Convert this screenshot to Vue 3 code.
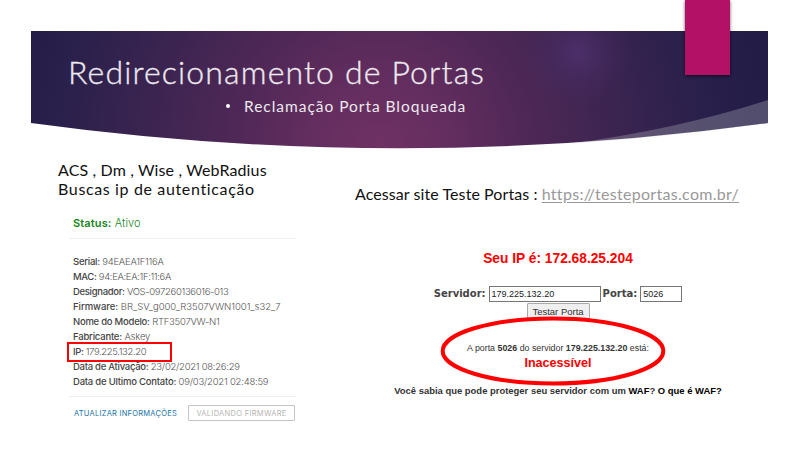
<script setup>
const device = [
  { label: 'Serial:', value: '94EAEA1F116A', spacing: -0.25 },
  { label: 'MAC:', value: '94:EA:EA:1F:11:6A', spacing: -0.35 },
  { label: 'Designador:', value: 'VOS-097260136016-013', spacing: -0.32 },
  { label: 'Firmware:', value: 'BR_SV_g000_R3507VWN1001_s32_7', spacing: -0.03 },
  { label: 'Nome do Modelo:', value: 'RTF3507VW-N1', spacing: -0.25 },
  { label: 'Fabricante:', value: 'Askey', spacing: -0.2 },
  { label: 'IP:', value: '179.225.132.20', spacing: -0.38, marked: true },
  { label: 'Data de Ativação:', value: '23/02/2021 08:26:29', spacing: -0.27 },
  { label: 'Data de Ultimo Contato:', value: '09/03/2021 02:48:59', spacing: -0.22 },
]
</script>

<template>
  <main class="slide">
    <header class="banner">
      <svg class="backdrop" viewBox="0 0 737 119" aria-hidden="true">
        <defs>
          <radialGradient id="base" gradientUnits="userSpaceOnUse" cx="349" cy="119" r="395">
            <stop offset="0" stop-color="#703163" />
            <stop offset=".16" stop-color="#652e60" />
            <stop offset=".36" stop-color="#502857" />
            <stop offset=".6" stop-color="#3b2450" />
            <stop offset=".82" stop-color="#29204b" />
            <stop offset="1" stop-color="#221c47" />
          </radialGradient>
          <radialGradient id="glow" gradientUnits="userSpaceOnUse" cx="547" cy="22" r="56">
            <stop offset="0" stop-color="#4e306d" stop-opacity=".9" />
            <stop offset=".5" stop-color="#462b62" stop-opacity=".5" />
            <stop offset="1" stop-color="#452859" stop-opacity="0" />
          </radialGradient>
        </defs>
        <path d="M0 0H737V92Q368 142.500 0 92Z" fill="url(#base)" />
        <path d="M0 0H737V92Q368 142.500 0 92Z" fill="url(#glow)" />
        <path d="M737 69Q648 98 540 112.500Q640 106 737 92Z" fill="#b9b9bd" fill-opacity=".32" />
      </svg>
      <h1>Redirecionamento de Portas</h1>
      <p class="subtitle"><span class="dot"></span><span>Reclamação Porta Bloqueada</span></p>
      <div class="ribbon"></div>
    </header>

    <div class="columns">
      <section class="left">
        <h2 class="intro"><span class="one">ACS , Dm , Wise , WebRadius</span><br><span class="two">Buscas ip de autenticação</span></h2>
        <div class="panel">
          <p class="status"><b>Status:</b> Ativo</p>
          <ul class="details">
            <li v-for="row in device" :key="row.label" :class="{ marked: row.marked }" :style="{ letterSpacing: row.spacing + 'px' }">
              <b>{{ row.label }}</b> {{ row.value }}
            </li>
          </ul>
          <div class="actions">
            <a class="refresh">ATUALIZAR INFORMAÇÕES</a>
            <button class="validating">VALIDANDO FIRMWARE</button>
          </div>
        </div>
      </section>

      <section class="right">
        <p class="access">Acessar site Teste Portas : <a>https://testeportas.com.br/</a></p>
        <div class="checker">
          <h3>Seu IP é: 172.68.25.204</h3>
          <div class="fields">
            <label>Servidor:</label><span class="input server">179.225.132.20</span>
            <label>Porta:</label><span class="input port">5026</span>
          </div>
          <button class="test">Testar Porta</button>
          <div class="result">
            <p>A porta <b>5026</b> do servidor <b>179.225.132.20</b> está:</p>
            <strong>Inacessível</strong>
            <svg class="ring" viewBox="0 0 226 70" aria-hidden="true">
              <ellipse cx="113" cy="35" rx="110.300" ry="32.500" />
            </svg>
          </div>
          <p class="waf">Você sabia que pode proteger seu servidor com um <b>WAF</b>? <b>O que é WAF?</b></p>
        </div>
      </section>
    </div>
  </main>
</template>

<style>
body { margin: 0; background: #fff; }
</style>

<style scoped>
* { box-sizing: border-box; }
h1, h2, h3, p, ul { margin: 0; padding: 0; font-weight: 400; }
.slide { width: 800px; height: 450px; overflow: hidden; padding: 31px 32px 0 31px; background: #fff; font-family: "Century Gothic", "URW Gothic", Lato, sans-serif; white-space: nowrap; }
.banner { position: relative; height: 119px; padding: 21px 0 0 37px; color: #ece9ed; }
.backdrop { position: absolute; left: 0; top: 0; width: 737px; height: 119px; }
h1 { position: relative; font-size: 32px; line-height: 40px; font-weight: 300; letter-spacing: 1.15px; -webkit-text-stroke: .35px #ece9ed; }
.subtitle { position: relative; display: flex; align-items: center; padding: 4px 0 0 158px; font-size: 15.5px; line-height: 20px; letter-spacing: .97px; }
.dot { width: 4px; height: 4px; border-radius: 50%; background: #fff; margin-right: 14px; }
.ribbon { position: absolute; left: 654px; top: -31px; width: 45px; height: 75px; background: #b31166; box-shadow: 0 1px 3px rgba(0, 0, 0, .65); }
.columns { display: grid; grid-template-columns: 310px 1fr; }
.left { padding: 10px 0 0 27px; }
.intro { font-size: 16px; line-height: 19px; color: #111; }
.one { letter-spacing: .13px; }
.two { letter-spacing: .64px; }
.panel { width: 227px; margin-left: 11px; padding-top: 16px; font-family: Inter, sans-serif; }
.status { height: 25px; padding-left: 4px; border-bottom: 1px solid #eee; color: #16851a; font-size: 11px; line-height: 18px; font-weight: 300; letter-spacing: .12px; }
.status b { font-weight: 600; }
.details { list-style: none; padding: 15px 0 0 4px; }
.details li { position: relative; height: 15px; color: #555; font-size: 9.5px; line-height: 15px; font-weight: 300; }
.details b { font-weight: 500; color: #444; }
.marked::after { content: ""; box-sizing: border-box; position: absolute; left: -6px; top: -2px; width: 105px; height: 20px; border: 2px solid #f00; }
.actions { display: flex; justify-content: space-between; align-items: center; margin-top: 7px; padding: 8px 1px 0 5px; border-top: 1px solid #eee; }
.refresh { color: #1974a8; font-size: 7.5px; letter-spacing: .24px; }
.validating { width: 107px; height: 16px; padding: 0; border: 1px solid #c4c4c4; border-radius: 1px; background: #fff; color: #b5b5b5; font: 7.5px Inter, sans-serif; letter-spacing: .3px; }
.right { padding-top: 33px; }
.access { padding-left: 14px; font-size: 16px; line-height: 22px; color: #111; letter-spacing: .08px; }
.access a { color: #999; letter-spacing: .3px; text-decoration: underline; text-underline-offset: 2px; }
.checker { display: flex; flex-direction: column; align-items: center; width: 434px; padding-top: 44px; font-family: "Liberation Sans", Arial, sans-serif; }
h3 { font-size: 13.75px; line-height: 20px; font-weight: 700; color: #f00; }
.fields { display: flex; align-items: center; margin-top: 16px; height: 17px; font-size: 9px; color: #444; }
.fields label { margin-right: 3px; font: 700 10px "DejaVu Sans", sans-serif; }
.input { height: 16px; padding-left: 2px; border: 1px solid #767676; line-height: 15px; color: #222; }
.server { width: 112px; margin-right: 2px; }
.port { width: 42px; }
.test { width: 63px; height: 16px; margin-top: 1px; padding: 0; border: 1px solid #aaa; border-radius: 1px; background: #efefef; color: #333; font: 9.5px "Liberation Sans", sans-serif; }
.result { position: relative; display: flex; flex-direction: column; align-items: center; padding-top: 22px; }
.result p { font-size: 8.85px; line-height: 14px; color: #333; }
.result strong { font-size: 12.6px; line-height: 16px; color: #f00; }
.ring { position: absolute; left: 50%; top: -3px; width: 226px; height: 70px; margin-left: -118px; fill: none; stroke: #f00; stroke-width: 4; }
.waf { margin-top: 13px; font-size: 9.45px; line-height: 14px; font-weight: 700; color: #333; }
.waf b { color: #000; }
</style>
